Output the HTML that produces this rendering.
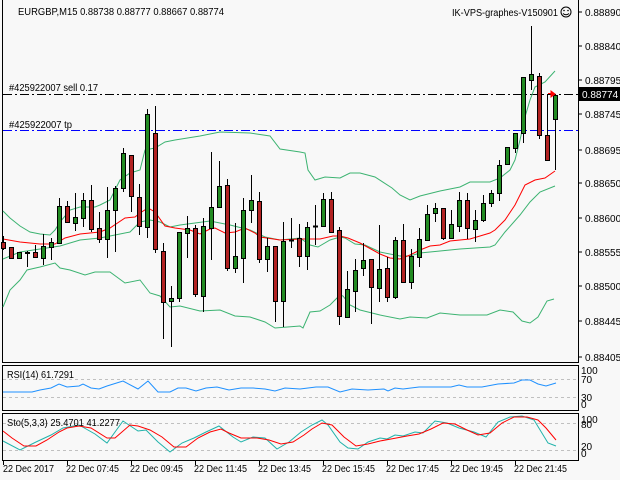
<!DOCTYPE html>
<html><head><meta charset="utf-8"><style>
html,body{margin:0;padding:0;background:#f8f8f8;width:620px;height:480px;overflow:hidden}
svg{display:block}
text{font-family:"Liberation Sans",sans-serif;font-size:10px;fill:#000}
</style></head><body>
<svg width="620" height="480" viewBox="0 0 620 480" xmlns="http://www.w3.org/2000/svg">
<rect width="620" height="480" fill="#f8f8f8"/>
<line x1="2.5" y1="0" x2="2.5" y2="362" stroke="#000"/>
<line x1="578.5" y1="0" x2="578.5" y2="362" stroke="#000"/>
<line x1="2" y1="362.5" x2="579" y2="362.5" stroke="#000"/>
<rect x="2.5" y="365.5" width="576" height="45" fill="none" stroke="#000"/>
<rect x="2.5" y="413.5" width="576" height="47" fill="none" stroke="#000"/>
<g stroke="#000">
<line x1="578" y1="12" x2="582" y2="12"/><line x1="578" y1="46" x2="582" y2="46"/><line x1="578" y1="80" x2="582" y2="80"/><line x1="578" y1="114" x2="582" y2="114"/><line x1="578" y1="150" x2="582" y2="150"/><line x1="578" y1="183" x2="582" y2="183"/><line x1="578" y1="218" x2="582" y2="218"/><line x1="578" y1="252" x2="582" y2="252"/><line x1="578" y1="286" x2="582" y2="286"/><line x1="578" y1="321" x2="582" y2="321"/><line x1="578" y1="357" x2="582" y2="357"/>
</g>
<g>
<text x="585" y="16">0.88890</text><text x="585" y="50">0.88840</text><text x="585" y="84">0.88795</text><text x="585" y="118">0.88745</text><text x="585" y="154">0.88695</text><text x="585" y="187">0.88650</text><text x="585" y="222">0.88600</text><text x="585" y="256">0.88555</text><text x="585" y="290">0.88500</text><text x="585" y="325">0.88445</text><text x="585" y="361">0.88405</text>
</g>
<rect x="579" y="87" width="41" height="14" fill="#000"/>
<text x="582" y="98" style="fill:#fff">0.88774</text>
<text x="18" y="15" textLength="206" lengthAdjust="spacingAndGlyphs">EURGBP,M15  0.88738 0.88777 0.88667 0.88774</text>
<text x="452" y="16" textLength="106" lengthAdjust="spacingAndGlyphs">IK-VPS-graphes-V150901</text>
<circle cx="566" cy="12" r="5" fill="none" stroke="#000"/><circle cx="564" cy="10.5" r="0.8"/><circle cx="568" cy="10.5" r="0.8"/><path d="M563 13.5 Q566 16 569 13.5" fill="none" stroke="#000"/>
<text x="9" y="91" textLength="89" lengthAdjust="spacingAndGlyphs">#425922007 sell 0.17</text>
<text x="9" y="128" textLength="63" lengthAdjust="spacingAndGlyphs">#425922007 tp</text>
<line x1="3" y1="94.5" x2="578" y2="94.5" stroke="#000" stroke-dasharray="9,3,2,3"/>
<line x1="3" y1="130.5" x2="578" y2="130.5" stroke="#0000ff" stroke-dasharray="9,3,2,3"/>
<g fill="none" stroke-width="1">
<polyline stroke="#3cb371" points="3,211 10,218 20,226 30,232 40,234 50,235 55,230 60,222 70,210 80,207 95,207 100,205 110,200 120,180 130,173 140,170 145,150 155,148 165,142 175,140 200,136 220,132 250,133 270,136 280,149 300,152 305,153 308,170 315,180 325,177 340,178 350,173 360,173 375,177 392,188 400,195 410,200 420,196 440,191 460,187 470,182 490,182 500,178 510,170 515,160 520,140 525,117 530,100 535,87 545,82 555,71"/>
<polyline stroke="#3cb371" points="3,259 20,252 40,249 60,246 80,240 100,238 120,234 130,232 140,222 150,220 160,222 170,227 180,225 210,221 230,225 250,230 265,237 280,240 300,238 310,245 318,247 330,240 340,237 345,238 355,244 365,245 380,252 400,256 410,256 420,253 440,251 460,249 490,247 495,245 505,232 520,215 530,202 540,192 555,186"/>
<polyline stroke="#3cb371" points="3,307 10,290 20,280 27,270 40,267 55,263 60,268 70,270 85,275 95,272 110,272 125,283 140,280 150,293 160,296 170,307 180,306 200,311 220,310 235,316 250,317 265,322 275,328 300,326 303,328 310,312 320,311 330,305 340,295 343,296 350,305 360,310 380,315 400,319 410,317 427,318 440,313 460,315 487,315 500,310 513,312 522,321 530,323 538,317 547,301 554,299"/>
<polyline stroke="#ff0000" points="3,239 20,242 40,244 55,244 65,238 80,234 100,232 110,228 125,218 135,217 140,213 148,208 155,212 165,226 175,228 190,230 200,234 210,229 215,228 225,233 235,232 245,228 255,233 260,237 280,240 300,239 320,239 333,236 340,236 348,238 360,243 380,254 390,258 400,259 410,255 420,250 430,246 440,245 450,241 470,239 480,236 490,233 495,230 505,220 515,205 525,185 535,180 545,178 555,171"/>
</g>
<g stroke="#000" stroke-width="1">
<g>
<line x1="3.5" y1="236" x2="3.5" y2="250"/><line x1="11.5" y1="247" x2="11.5" y2="259"/><line x1="19.5" y1="252" x2="19.5" y2="259"/><line x1="27.5" y1="251" x2="27.5" y2="267"/><line x1="35.5" y1="245" x2="35.5" y2="258"/><line x1="43.5" y1="234" x2="43.5" y2="265"/><line x1="51.5" y1="238" x2="51.5" y2="260"/><line x1="59.5" y1="198" x2="59.5" y2="244"/><line x1="67.5" y1="201" x2="67.5" y2="223"/><line x1="75.5" y1="193" x2="75.5" y2="231"/><line x1="83.5" y1="193" x2="83.5" y2="227"/><line x1="91.5" y1="185" x2="91.5" y2="232"/><line x1="99.5" y1="212" x2="99.5" y2="243"/><line x1="107.5" y1="187" x2="107.5" y2="258"/><line x1="115.5" y1="186" x2="115.5" y2="252"/><line x1="123.5" y1="148" x2="123.5" y2="192"/><line x1="131.5" y1="155" x2="131.5" y2="212"/><line x1="139.5" y1="184" x2="139.5" y2="235"/><line x1="147.5" y1="109" x2="147.5" y2="238"/><line x1="155.5" y1="106" x2="155.5" y2="253"/><line x1="163.5" y1="243" x2="163.5" y2="339"/><line x1="171.5" y1="286" x2="171.5" y2="347"/><line x1="179.5" y1="232" x2="179.5" y2="302"/><line x1="187.5" y1="216" x2="187.5" y2="258"/><line x1="195.5" y1="225" x2="195.5" y2="297"/><line x1="203.5" y1="218" x2="203.5" y2="312"/><line x1="211.5" y1="152" x2="211.5" y2="260"/><line x1="219.5" y1="161" x2="219.5" y2="207"/><line x1="227.5" y1="179" x2="227.5" y2="271"/><line x1="235.5" y1="223" x2="235.5" y2="273"/><line x1="243.5" y1="198" x2="243.5" y2="283"/><line x1="251.5" y1="175" x2="251.5" y2="223"/><line x1="259.5" y1="192" x2="259.5" y2="263"/><line x1="267.5" y1="238" x2="267.5" y2="272"/><line x1="275.5" y1="246" x2="275.5" y2="322"/><line x1="283.5" y1="222" x2="283.5" y2="327"/><line x1="291.5" y1="218" x2="291.5" y2="248"/><line x1="299.5" y1="224" x2="299.5" y2="267"/><line x1="307.5" y1="222" x2="307.5" y2="270"/><line x1="315.5" y1="205" x2="315.5" y2="245"/><line x1="323.5" y1="193" x2="323.5" y2="226"/><line x1="331.5" y1="192" x2="331.5" y2="232"/><line x1="339.5" y1="227" x2="339.5" y2="325"/><line x1="347.5" y1="271" x2="347.5" y2="317"/><line x1="355.5" y1="259" x2="355.5" y2="312"/><line x1="363.5" y1="243" x2="363.5" y2="276"/><line x1="371.5" y1="259" x2="371.5" y2="324"/><line x1="379.5" y1="225" x2="379.5" y2="302"/><line x1="387.5" y1="257" x2="387.5" y2="302"/><line x1="395.5" y1="237" x2="395.5" y2="299"/><line x1="403.5" y1="224" x2="403.5" y2="282"/><line x1="411.5" y1="249" x2="411.5" y2="289"/><line x1="419.5" y1="228" x2="419.5" y2="267"/><line x1="427.5" y1="205" x2="427.5" y2="241"/><line x1="435.5" y1="203" x2="435.5" y2="222"/><line x1="443.5" y1="208" x2="443.5" y2="240"/><line x1="451.5" y1="210" x2="451.5" y2="238"/><line x1="459.5" y1="192" x2="459.5" y2="232"/><line x1="467.5" y1="193" x2="467.5" y2="239"/><line x1="475.5" y1="210" x2="475.5" y2="242"/><line x1="483.5" y1="195" x2="483.5" y2="222"/><line x1="491.5" y1="190" x2="491.5" y2="207"/><line x1="499.5" y1="160" x2="499.5" y2="201"/><line x1="507.5" y1="147" x2="507.5" y2="165"/><line x1="515.5" y1="133" x2="515.5" y2="153"/><line x1="523.5" y1="77" x2="523.5" y2="143"/><line x1="531.5" y1="26" x2="531.5" y2="90"/><line x1="539.5" y1="73" x2="539.5" y2="139"/><line x1="547.5" y1="94" x2="547.5" y2="160"/><line x1="555.5" y1="95" x2="555.5" y2="170"/>
</g>
<g fill="#b22222">
<rect x="1.5" y="242.5" width="4" height="6"/><rect x="9.5" y="247.5" width="4" height="11"/><rect x="33.5" y="252.5" width="4" height="5"/><rect x="65.5" y="206.5" width="4" height="16"/><rect x="89.5" y="200.5" width="4" height="29"/><rect x="97.5" y="228.5" width="4" height="11"/><rect x="129.5" y="155.5" width="4" height="41"/><rect x="137.5" y="197.5" width="4" height="29"/><rect x="153.5" y="133.5" width="4" height="116"/><rect x="161.5" y="251.5" width="4" height="51"/><rect x="193.5" y="228.5" width="4" height="66"/><rect x="225.5" y="185.5" width="4" height="83"/><rect x="257.5" y="201.5" width="4" height="58"/><rect x="273.5" y="246.5" width="4" height="55"/><rect x="297.5" y="238.5" width="4" height="18"/><rect x="329.5" y="199.5" width="4" height="33"/><rect x="337.5" y="230.5" width="4" height="86"/><rect x="369.5" y="259.5" width="4" height="28"/><rect x="385.5" y="268.5" width="4" height="29"/><rect x="401.5" y="240.5" width="4" height="42"/><rect x="441.5" y="208.5" width="4" height="30"/><rect x="465.5" y="200.5" width="4" height="28"/><rect x="537.5" y="76.5" width="4" height="59"/><rect x="545.5" y="135.5" width="4" height="25"/>
</g>
<g fill="#228b22">
<rect x="17.5" y="252.5" width="4" height="6"/><rect x="25.5" y="252.5" width="4" height="1"/><rect x="41.5" y="246.5" width="4" height="12"/><rect x="49.5" y="242.5" width="4" height="5"/><rect x="57.5" y="206.5" width="4" height="37"/><rect x="73.5" y="217.5" width="4" height="6"/><rect x="81.5" y="200.5" width="4" height="18"/><rect x="105.5" y="210.5" width="4" height="29"/><rect x="113.5" y="188.5" width="4" height="22"/><rect x="121.5" y="153.5" width="4" height="35"/><rect x="145.5" y="114.5" width="4" height="113"/><rect x="169.5" y="298.5" width="4" height="3"/><rect x="177.5" y="232.5" width="4" height="66"/><rect x="185.5" y="228.5" width="4" height="5"/><rect x="201.5" y="226.5" width="4" height="70"/><rect x="209.5" y="207.5" width="4" height="21"/><rect x="217.5" y="186.5" width="4" height="21"/><rect x="233.5" y="256.5" width="4" height="12"/><rect x="241.5" y="210.5" width="4" height="48"/><rect x="249.5" y="200.5" width="4" height="10"/><rect x="265.5" y="246.5" width="4" height="13"/><rect x="281.5" y="241.5" width="4" height="60"/><rect x="289.5" y="240" width="4" height="1"/><rect x="305.5" y="227.5" width="4" height="29"/><rect x="313.5" y="226" width="4" height="1"/><rect x="321.5" y="199.5" width="4" height="27"/><rect x="345.5" y="289.5" width="4" height="28"/><rect x="353.5" y="270.5" width="4" height="21"/><rect x="361.5" y="260.5" width="4" height="8"/><rect x="377.5" y="269.5" width="4" height="19"/><rect x="393.5" y="240.5" width="4" height="57"/><rect x="409.5" y="256.5" width="4" height="26"/><rect x="417.5" y="239.5" width="4" height="18"/><rect x="425.5" y="214.5" width="4" height="26"/><rect x="433.5" y="208.5" width="4" height="5"/><rect x="449.5" y="224.5" width="4" height="14"/><rect x="457.5" y="200.5" width="4" height="26"/><rect x="473.5" y="220.5" width="4" height="9"/><rect x="481.5" y="203.5" width="4" height="17"/><rect x="489.5" y="193.5" width="4" height="10"/><rect x="497.5" y="165.5" width="4" height="28"/><rect x="505.5" y="147.5" width="4" height="17"/><rect x="513.5" y="133.5" width="4" height="15"/><rect x="521.5" y="77.5" width="4" height="56"/><rect x="529.5" y="74.5" width="4" height="6"/><rect x="553.5" y="95.5" width="4" height="24"/>
</g>
</g>
<path d="M551 91 L555 94 L551 97 Z M548 93.5 h4" fill="#ff0000" stroke="#ff0000"/>
<text x="7" y="378" textLength="67" lengthAdjust="spacingAndGlyphs">RSI(14) 61.7291</text>
<line x1="3" y1="379.5" x2="578" y2="379.5" stroke="#c0c0c0" stroke-dasharray="3,3"/>
<line x1="3" y1="397.5" x2="578" y2="397.5" stroke="#c0c0c0" stroke-dasharray="3,3"/>
<text x="581" y="374">100</text><text x="581" y="383">70</text><text x="581" y="401">30</text><text x="581" y="408">0</text>
<polyline fill="none" stroke="#1e90ff" points="3,392 16,392 32,392 40,390 51,388 59,384 67,387 79,386 83,384 91,388 99,389 107,386 123,381 138,389 148,381 158,392 170,392 178,388 186,388 196,391 206,388 217,387 229,390 241,388 253,388 265,389 275,391 285,388 300,389 316,387 328,387 340,392 352,389 368,390 384,389 388,391 395,388 403,389 419,387 435,387 451,387 459,385 467,387 482,387 498,384 514,383 522,380 530,380 538,384 546,386 556,383"/>
<line x1="3" y1="423.5" x2="578" y2="423.5" stroke="#c0c0c0" stroke-dasharray="3,3"/>
<line x1="3" y1="450.5" x2="578" y2="450.5" stroke="#c0c0c0" stroke-dasharray="3,3"/>
<text x="581" y="423">100</text><text x="581" y="428">80</text><text x="581" y="450">20</text><text x="581" y="457">0</text>
<polyline fill="none" stroke="#20b2aa" points="3,441 20,450 36,442 51,435 63,428 79,425 95,434 107,443 123,421 138,431 146,430 158,442 170,452 182,443 194,438 206,432 219,426 233,437 241,442 253,437 265,438 277,449 289,442 301,432 312,425 322,420 328,425 340,442 348,448 358,449 368,442 380,438 387,439 395,435 403,436 415,432 423,433 435,421 447,423 459,428 474,432 486,437 498,422 510,417 522,416 534,420 548,443 556,446"/>
<polyline fill="none" stroke="#ff0000" points="3,431 12,438 24,446 36,446 47,440 59,432 67,428 79,426 91,428 107,438 115,438 130,425 138,426 150,430 162,437 174,447 186,447 198,438 210,432 221,429 229,433 241,438 257,438 269,440 281,444 293,442 304,435 312,429 322,423 332,425 344,437 356,446 368,444 380,441 391,439 407,436 419,434 431,429 443,423 455,424 467,430 478,435 490,433 502,423 514,417 527,417 538,420 546,428 556,440"/>
<text x="7" y="426" textLength="113" lengthAdjust="spacingAndGlyphs">Sto(5,3,3) 25.4701 41.2277</text>
<g stroke="#000"><line x1="3.5" y1="461" x2="3.5" y2="465"/><line x1="67.5" y1="461" x2="67.5" y2="465"/><line x1="131.5" y1="461" x2="131.5" y2="465"/><line x1="195.5" y1="461" x2="195.5" y2="465"/><line x1="259.5" y1="461" x2="259.5" y2="465"/><line x1="323.5" y1="461" x2="323.5" y2="465"/><line x1="387.5" y1="461" x2="387.5" y2="465"/><line x1="451.5" y1="461" x2="451.5" y2="465"/><line x1="515.5" y1="461" x2="515.5" y2="465"/></g>
<g>
<text x="3" y="472" textLength="51" lengthAdjust="spacingAndGlyphs">22 Dec 2017</text><text x="66" y="472" textLength="53" lengthAdjust="spacingAndGlyphs">22 Dec 07:45</text><text x="130" y="472" textLength="53" lengthAdjust="spacingAndGlyphs">22 Dec 09:45</text><text x="194" y="472" textLength="53" lengthAdjust="spacingAndGlyphs">22 Dec 11:45</text><text x="258" y="472" textLength="53" lengthAdjust="spacingAndGlyphs">22 Dec 13:45</text><text x="322" y="472" textLength="53" lengthAdjust="spacingAndGlyphs">22 Dec 15:45</text><text x="386" y="472" textLength="53" lengthAdjust="spacingAndGlyphs">22 Dec 17:45</text><text x="450" y="472" textLength="53" lengthAdjust="spacingAndGlyphs">22 Dec 19:45</text><text x="514" y="472" textLength="53" lengthAdjust="spacingAndGlyphs">22 Dec 21:45</text>
</g>
</svg>
</body></html>
